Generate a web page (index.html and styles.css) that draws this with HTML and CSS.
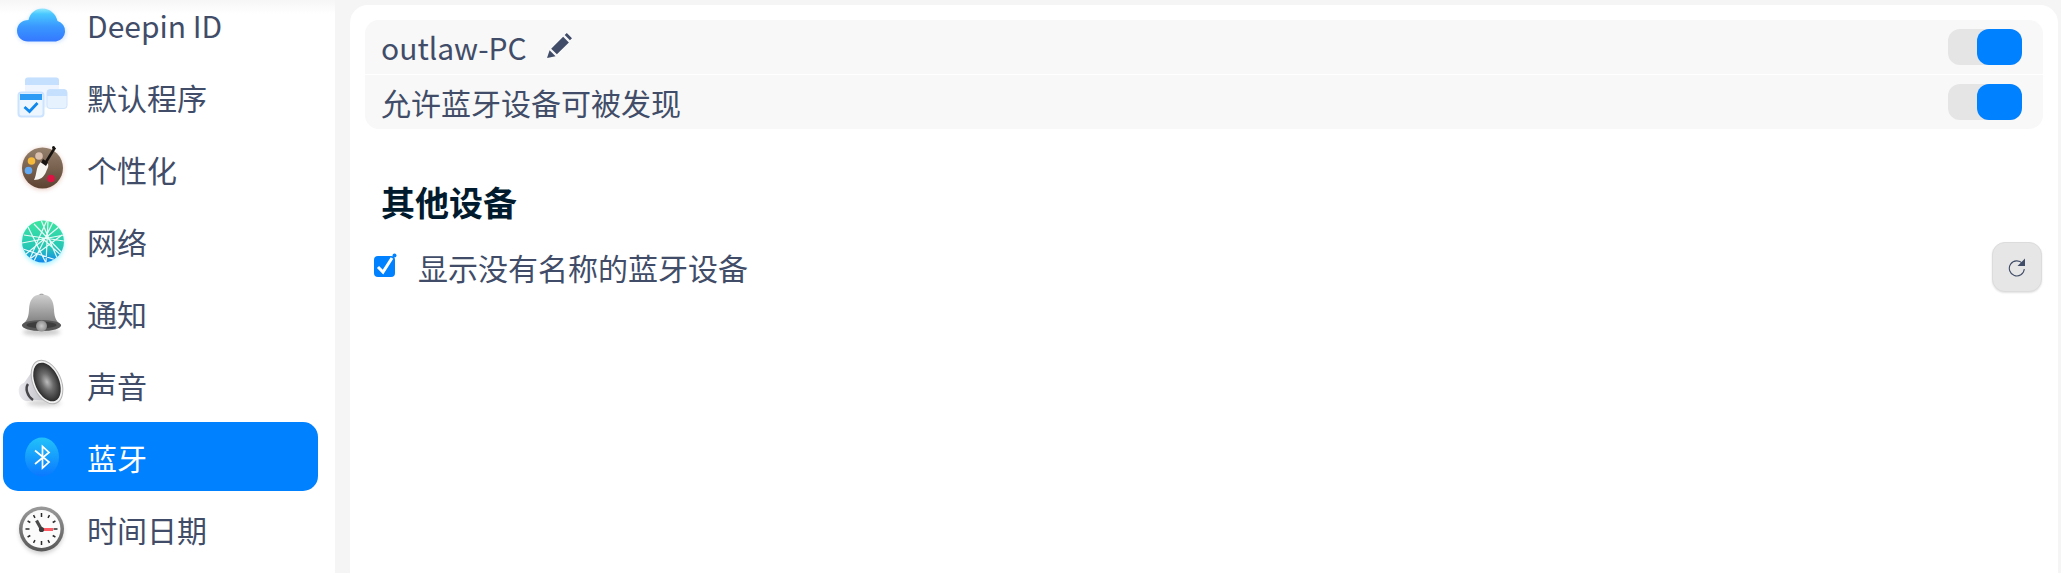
FILE: index.html
```html
<!DOCTYPE html>
<html lang="zh-CN">
<head>
<meta charset="utf-8">
<title>蓝牙</title>
<link rel="stylesheet" href="styles.css">
</head>
<body>
<aside class="sidebar">
  <ul class="nav">
    <li class="nav-item">
      <svg class="nav-icon" viewBox="0 0 56 56">
        <defs>
          <linearGradient id="cloud" x1="0" y1="0" x2="0" y2="1"><stop offset="0" stop-color="#4fdcff"/><stop offset=".55" stop-color="#3a97ff"/><stop offset="1" stop-color="#3478ff"/></linearGradient>
          <filter id="soft" x="-30%" y="-30%" width="160%" height="170%"><feGaussianBlur stdDeviation="2"/></filter>
        </defs>
        <path d="M14 45h28a9 9 0 0 0 1-19C42 17 36 12 28.500 12 21 12 16 17 14.500 24 8 24 3 28 3 34.500S8 45 14 45z" fill="#6ea8ff" opacity=".35" filter="url(#soft)"/>
        <path d="M14 44.500h28a10.500 10.500 0 0 0 1.500-20.500C42 17 36 11.500 28.500 11.500 21.500 11.500 16 16 14.500 23 8 23 3 27.500 3 33.800S8 44.500 14 44.500z" fill="url(#cloud)"/>
      </svg>
      <span>Deepin ID</span>
    </li>
    <li class="nav-item">
      <svg class="nav-icon" viewBox="0 0 56 56">
        <rect x="11" y="8.500" width="34" height="30" rx="3" fill="#eef5ff"/>
        <path d="M11 16v-4.500a3 3 0 0 1 3-3h28a3 3 0 0 1 3 3V16z" fill="#c5e0ff"/>
        <rect x="33" y="20.500" width="20" height="19" rx="3" fill="#e7f2ff" stroke="#cfe4fb"/>
        <path d="M33 27v-3.500a3 3 0 0 1 3-3h14a3 3 0 0 1 3 3V27z" fill="#c5e0ff"/>
        <rect x="4.500" y="23.500" width="25" height="24" rx="3" fill="#edf6ff" stroke="#cbe3ff" stroke-width="2"/>
        <rect x="6" y="25" width="22" height="6" fill="#2c9bf5"/>
        <path d="M10.500 38l5 4.500 8-8.500" fill="none" stroke="#0d86ee" stroke-width="2.800"/>
      </svg>
      <span>默认程序</span>
    </li>
    <li class="nav-item">
      <svg class="nav-icon" viewBox="0 0 56 56">
        <defs><linearGradient id="wood" x1="0" y1="0" x2="0" y2="1"><stop offset="0" stop-color="#94806c"/><stop offset="1" stop-color="#5d4232"/></linearGradient></defs>
        <circle cx="28.500" cy="28" r="21" fill="#c77a60" opacity=".35" filter="url(#soft)"/>
        <circle cx="28.500" cy="27" r="20.500" fill="url(#wood)"/>
        <circle cx="25" cy="15" r="3.800" fill="#d9bfae"/>
        <circle cx="17.500" cy="20" r="3.800" fill="#f6b93a"/>
        <circle cx="14.500" cy="29.500" r="3.800" fill="#62a9f5"/>
        <circle cx="37" cy="37.500" r="3.800" fill="#dc1444"/>
        <path d="M41 6.500 32 21" stroke="#171412" stroke-width="2.600" fill="none"/>
        <circle cx="39.500" cy="6.500" r="1.500" fill="#171412"/>
        <path d="M34 23c-3-3-6-3-8-1-4 4-3 11-6 17 6 0 10-3 12-8 1-3 3-5 2-8z" fill="#f7f5f1"/>
        <path d="M29 18l5 3.500-2 3.500-5-3.500z" fill="#171412"/>
      </svg>
      <span>个性化</span>
    </li>
    <li class="nav-item">
      <svg class="nav-icon" viewBox="0 0 56 56">
        <defs>
          <linearGradient id="globe" x1="0" y1="0" x2="0" y2="1"><stop offset="0" stop-color="#3de6a0"/><stop offset=".65" stop-color="#25c7b5"/><stop offset="1" stop-color="#1188ee"/></linearGradient>
          <clipPath id="globe-clip"><circle cx="29" cy="28.500" r="21"/></clipPath>
        </defs>
        <circle cx="29" cy="31" r="21" fill="#46e5ff" opacity=".45" filter="url(#soft)"/>
        <circle cx="29" cy="28.500" r="21" fill="url(#globe)"/>
        <g clip-path="url(#globe-clip)" stroke="#fff" stroke-width="1.200" fill="none" opacity=".9">
          <path d="M33 7 14 50M39 9 20 48M27 7l17 40M20 11l29 30M10 22l40 6M8 30l42-8M12 41 46 13M16 46l32-24M34 8l-2 42M14 14l18 36M9 36l36 12M28 25l22 20"/>
        </g>
      </svg>
      <span>网络</span>
    </li>
    <li class="nav-item">
      <svg class="nav-icon" viewBox="0 0 56 56">
        <defs>
          <linearGradient id="bell" x1="0" y1="0" x2="0" y2="1"><stop offset="0" stop-color="#cfcfcf"/><stop offset="1" stop-color="#7c7c7c"/></linearGradient>
          <radialGradient id="clapper"><stop offset="0" stop-color="#c8c8c8"/><stop offset="1" stop-color="#8e8e8e"/></radialGradient>
        </defs>
        <ellipse cx="27.500" cy="47" rx="19" ry="3.500" fill="#777" opacity=".4" filter="url(#soft)"/>
        <path d="M25 10.500c0-2.500 5-2.500 5 0z" fill="#8a8a8a"/>
        <path d="M27.500 9.500c-9 0-12 6-12.500 15-.3 6-1 11-7 15.500h39c-6-4.500-6.700-9.500-7-15.500-.5-9-3.500-15-12.500-15z" fill="url(#bell)"/>
        <ellipse cx="27.500" cy="40.500" rx="19.500" ry="5.500" fill="#575757"/>
        <ellipse cx="27.500" cy="40" rx="15" ry="3.200" fill="#3d3d3d"/>
        <circle cx="27.500" cy="41" r="5.500" fill="url(#clapper)"/>
      </svg>
      <span>通知</span>
    </li>
    <li class="nav-item">
      <svg class="nav-icon" viewBox="0 0 56 56">
        <defs>
          <linearGradient id="horn" x1="0" y1="0" x2="1" y2="0"><stop offset="0" stop-color="#e9e9ee"/><stop offset="1" stop-color="#a9a9b2"/></linearGradient>
          <radialGradient id="cone"><stop offset="0" stop-color="#bcbcbc"/><stop offset=".45" stop-color="#6c6c6c"/><stop offset="1" stop-color="#2c2c2c"/></radialGradient>
        </defs>
        <ellipse cx="30" cy="46" rx="17" ry="3" fill="#777" opacity=".35" filter="url(#soft)"/>
        <path d="M22 9 10 26c-4 1-6 5-5 10s5 9 10 8c3 0 4-1 6-1l21 1z" fill="url(#horn)"/>
        <path d="M14 27c-3 4-1 12 5 16" fill="none" stroke="#45454a" stroke-width="2.500"/>
        <ellipse cx="33" cy="25" rx="14" ry="23" transform="rotate(-24 33 25)" fill="#f2f2f2" stroke="#b5b5b5"/>
        <ellipse cx="33" cy="25" rx="12" ry="20.500" transform="rotate(-24 33 25)" fill="url(#cone)"/>
      </svg>
      <span>声音</span>
    </li>
    <li class="nav-item is-active">
      <svg class="nav-icon" viewBox="0 0 56 56">
        <defs><linearGradient id="bt" x1="0" y1="0" x2="0" y2="1"><stop offset="0" stop-color="#22c2fa"/><stop offset="1" stop-color="#0a78ff"/></linearGradient></defs>
        <ellipse cx="28" cy="28" rx="17" ry="19.500" fill="url(#bt)"/>
        <path d="M21 21.500 35 33l-6.500 6V17.500L35 23.500 21 35" fill="none" stroke="#fff" stroke-width="1.700"/>
      </svg>
      <span>蓝牙</span>
    </li>
    <li class="nav-item">
      <svg class="nav-icon" viewBox="0 0 56 56">
        <defs>
          <linearGradient id="rim" x1="0" y1="0" x2="0" y2="1"><stop offset="0" stop-color="#9a9a9a"/><stop offset="1" stop-color="#585858"/></linearGradient>
        </defs>
        <circle cx="27.500" cy="31" r="22" fill="#777" opacity=".35" filter="url(#soft)"/>
        <circle cx="27.500" cy="28" r="22.500" fill="url(#rim)"/>
        <circle cx="27.500" cy="28" r="19" fill="#fbfbfb"/>
        <path d="M27.500 12v4M27.500 40v4M11.500 28h4M39.500 28h4M19.500 14.100l1.500 2.700M34 39.200l1.500 2.700M13.600 20l2.700 1.500M38.700 34.500l2.700 1.500M35.500 14.100 34 16.800M21 39.200l-1.500 2.700M41.400 20l-2.700 1.500M16.300 34.500 13.600 36" stroke="#2b2b2b" stroke-width="1.500" fill="none"/>
        <path d="M28 28.500h11" stroke="#ff5a63" stroke-width="3" fill="none"/>
        <path d="M27.500 28.500 22.500 19.500" stroke="#4a4a4a" stroke-width="3.200" fill="none"/>
        <circle cx="27.500" cy="28.500" r="2.600" fill="#3a3a3a"/>
      </svg>
      <span>时间日期</span>
    </li>
  </ul>
</aside>
<main class="panel">
  <section class="settings">
    <div class="settings-row">
      <div class="name">
        <span>outlaw-PC</span>
        <svg class="pencil" viewBox="0 0 24 24"><path d="M0 24 2.500 16.500 8.200 22.200zM4 15 15.500 3.500 21 9 9.500 20.500zM17 2l2-2 5 5-2 2z" fill="#414d68"/></svg>
      </div>
      <div class="switch"><div class="knob"></div></div>
    </div>
    <div class="settings-row">
      <span>允许蓝牙设备可被发现</span>
      <div class="switch"><div class="knob"></div></div>
    </div>
  </section>
  <h2 class="heading">其他设备</h2>
  <div class="filter-row">
    <label class="filter">
      <svg class="check" viewBox="0 0 24 24">
        <rect x="1" y="3" width="21" height="21" rx="4" fill="#0081ff"/>
        <path d="M5 14l5 5L19 5" fill="none" stroke="#fff" stroke-width="3"/>
        <circle cx="21.500" cy="2.500" r="2" fill="#0081ff"/>
      </svg>
      <span>显示没有名称的蓝牙设备</span>
    </label>
    <button class="refresh" type="button" aria-label="刷新">
      <svg class="refresh-icon" viewBox="0 0 20 20">
        <path d="M15.500 6.500A7.500 7.500 0 1 0 17.300 12" fill="none" stroke="#414d68" stroke-width="1.100"/>
        <path d="M18 1.500V9h-7.500z" fill="#414d68"/>
      </svg>
    </button>
  </div>
</main>
</body>
</html>
```
FILE: styles.css
```css
* { box-sizing: border-box; }

html, body {
  margin: 0;
  height: 573px;
  overflow: hidden;
}

body {
  display: flex;
  background: #f5f5f5;
  color: #414d68;
  font-family: "Noto Sans CJK SC", "Noto Sans", sans-serif;
  font-size: 30px;
}

.sidebar {
  position: relative;
  width: 335px;
  flex: none;
  background: #fff;
  overflow: hidden;
}

.sidebar::before {
  content: "";
  position: absolute;
  inset: 0 0 auto 0;
  height: 14px;
  background: linear-gradient(#f6f6f6, rgba(255, 255, 255, 0));
  z-index: 1;
}

.nav {
  list-style: none;
  margin: -10px 0 0;
  padding: 0 17px 0 3px;
  display: flex;
  flex-direction: column;
  gap: 3px;
}

.nav-item {
  height: 69px;
  display: flex;
  align-items: center;
  gap: 17px;
  padding-left: 11px;
  border-radius: 15px;
}

.nav-item.is-active {
  background: #0081ff;
  color: #fff;
}

.nav-icon {
  width: 56px;
  height: 56px;
  flex: none;
  overflow: visible;
}

.panel {
  flex: 1;
  margin: 5px 3px 0 15px;
  padding: 15px 15px 0;
  background: #fff;
  border-radius: 18px 18px 0 0;
}

.settings {
  display: flex;
  flex-direction: column;
  gap: 1px;
  border-radius: 14px;
  overflow: hidden;
}

.settings-row {
  height: 54px;
  display: flex;
  align-items: center;
  justify-content: space-between;
  padding: 0 21px 0 16px;
  background: #f8f8f8;
}

.name {
  display: flex;
  align-items: center;
  gap: 20px;
}

.pencil {
  width: 25px;
  height: 25px;
  margin-top: -3px;
}

.switch {
  width: 74px;
  height: 36px;
  display: flex;
  justify-content: flex-end;
  border-radius: 12px;
  background: #e5e5e5;
}

.knob {
  width: 45px;
  height: 36px;
  border-radius: 12px;
  background: #0081ff;
}

.heading {
  margin: 48px 0 0 16px;
  font-size: 34px;
  line-height: 50px;
  font-weight: 700;
  color: #001a2e;
}

.filter-row {
  display: flex;
  align-items: center;
  justify-content: space-between;
  margin: 15px 1px 0 8px;
}

.filter {
  display: flex;
  align-items: center;
  gap: 21px;
}

.check {
  width: 24px;
  height: 24px;
  margin-top: -5px;
}

.refresh {
  width: 50px;
  height: 50px;
  padding: 0;
  display: flex;
  align-items: center;
  justify-content: center;
  background: #e6e6e6;
  border: 1px solid #dcdcdc;
  border-radius: 13px;
  box-shadow: 0 1px 2px rgba(0, 0, 0, 0.12);
}

.refresh-icon {
  width: 20px;
  height: 20px;
}
```
